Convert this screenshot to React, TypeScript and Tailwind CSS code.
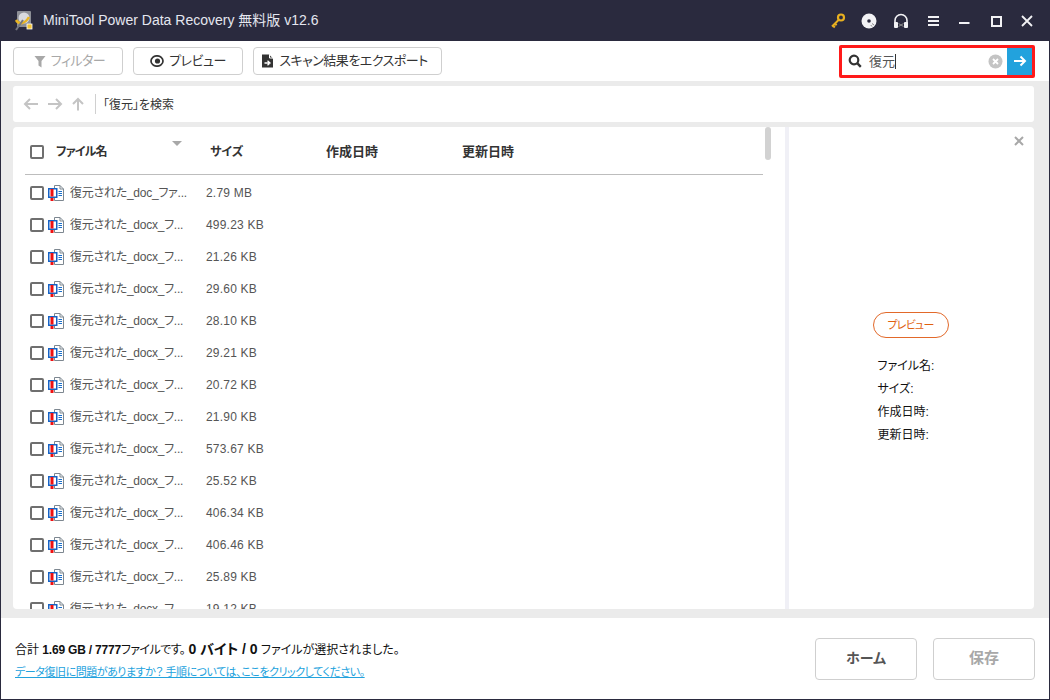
import React from "react";

const sizes = ["2.79 MB","499.23 KB","21.26 KB","29.60 KB","28.10 KB","29.21 KB","20.72 KB","21.90 KB","573.67 KB","25.52 KB","406.34 KB","406.46 KB","25.89 KB","19.12 KB"];

function FileIcon() {
  return (
    <svg width="16" height="16" viewBox="0 0 16 16" className="shrink-0">
      <path d="M6.5 0.5H12L15.5 4V15.5H6.5Z" fill="#fff" stroke="#7d8790" />
      <path d="M12 0.5V4H15.5" fill="none" stroke="#7d8790" />
      <path d="M10.5 6.5H14M10.5 8.5H14M10.5 10.5H14" stroke="#1b6fc9" strokeWidth="1" />
      <rect x="0.75" y="3.75" width="8" height="8.5" fill="#fff" stroke="#1763c6" strokeWidth="1.5" />
      <rect x="2.5" y="4" width="3" height="7.5" fill="#f01010" />
      <rect x="2.5" y="13" width="3" height="3" fill="#f01010" />
    </svg>
  );
}

function Check({ size = "w-[14px] h-[14px]" }: { size?: string }) {
  return <div className={`${size} shrink-0 border-2 border-[#6f6f6f] rounded-[2px] bg-white`} />;
}

function Row({ s }: { s: string }) {
  const name = s === "2.79 MB" ? "復元された_doc_ファ..." : "復元された_docx_フ...";
  return (
    <div className="h-8 shrink-0 flex items-center pl-[17px]">
      <Check />
      <div className="ml-[4px]"><FileIcon /></div>
      <div className="ml-[6px] w-[136px] text-[12px] tracking-[-0.25px] text-[#555] whitespace-nowrap overflow-hidden">{name}</div>
      <div className="text-[12px] tracking-[0.2px] text-[#555] whitespace-nowrap">{s}</div>
    </div>
  );
}

function ToolBtn({ w, children, muted }: { w: string; children: React.ReactNode; muted?: boolean }) {
  return (
    <div className={`${w} h-[28px] border border-[#cfcfcf] rounded-[4px] flex items-center justify-center gap-[5px] text-[13px] tracking-[-0.5px] ${muted ? "text-[#a8a8a8]" : "text-[#333]"}`}>
      {children}
    </div>
  );
}

export default function App() {
  return (
    <div className="w-[1050px] h-[700px] flex flex-col bg-white border-x border-b border-[#2a2a3e] overflow-hidden text-black [font-feature-settings:'palt']" style={{ fontFamily: '"Liberation Sans","Noto Sans CJK JP",sans-serif' }}>
      {/* title bar */}
      <div className="h-[41px] shrink-0 -mx-px bg-[#2a2a3e] flex items-center pl-[14px] pr-[17px]">
        <svg width="20" height="22" viewBox="0 0 20 22" className="shrink-0">
          <rect x="3" y="1" width="14" height="16" rx="1" fill="#8d8f96" />
          <circle cx="10" cy="8" r="5.5" fill="#d9dade" />
          <path d="M2 10C5 15 11 14 15 7" stroke="#e8b422" strokeWidth="2.5" fill="none" />
          <path d="M2 20L9 10" stroke="#75777f" strokeWidth="2" />
          <rect x="13" y="14" width="5" height="5" fill="#f2c230" stroke="#fff" strokeWidth="0.8" />
        </svg>
        <div className="ml-[9px] text-[14px] font-normal text-[#e4e6ef]">MiniTool Power Data Recovery 無料版 v12.6</div>
        <div className="ml-auto flex items-center">
          <svg width="16" height="16" viewBox="0 0 16 16"><circle cx="11" cy="4.5" r="3" fill="none" stroke="#e8b020" strokeWidth="2.2" /><path d="M8.8 6.8L2 13.5M3 12.5L4.8 14.5M5 10.5L6.6 12.2" stroke="#e8b020" strokeWidth="2" fill="none" /></svg>
          <svg width="16" height="16" viewBox="0 0 16 16" className="ml-[15px]"><circle cx="8" cy="8" r="7.5" fill="#f2f2f5" /><circle cx="8" cy="8" r="1.8" fill="#2a2a3e" /><path d="M11 10.5L13 12M9.8 12L11 13.6" stroke="#888" strokeWidth="1" /></svg>
          <svg width="16" height="16" viewBox="0 0 16 16" className="ml-[16px]"><path d="M2 10V7.5a6 6 0 0 1 12 0V10" fill="none" stroke="#f2f2f5" strokeWidth="1.6" /><rect x="1" y="9" width="4" height="6" rx="1" fill="#f2f2f5" /><rect x="11" y="9" width="4" height="6" rx="1" fill="#f2f2f5" /><path d="M5.5 10.5L10.5 13.5M10.5 10.5L5.5 13.5" stroke="#8a8a8a" strokeWidth="1" /></svg>
          <svg width="13" height="12" viewBox="0 0 13 12" className="ml-[18px]"><path d="M1 2H12M1 6H12M1 10H12" stroke="#f2f2f5" strokeWidth="2" /></svg>
          <svg width="12" height="12" viewBox="0 0 12 12" className="ml-[18px]"><path d="M1 8H11.5" stroke="#f2f2f5" strokeWidth="2" /></svg>
          <svg width="12" height="12" viewBox="0 0 12 12" className="ml-[20px]"><rect x="2" y="2" width="9" height="9" fill="none" stroke="#f2f2f5" strokeWidth="2" /></svg>
          <svg width="12" height="12" viewBox="0 0 12 12" className="ml-[19px]"><path d="M1 1L11 11M11 1L1 11" stroke="#f2f2f5" strokeWidth="1.8" /></svg>
        </div>
      </div>

      {/* toolbar */}
      <div className="h-[40px] shrink-0 flex items-center pl-[12px] pr-[14px] gap-[10px]">
        <ToolBtn w="w-[110px] pl-[3px]" muted>
          <svg width="12" height="13" viewBox="0 0 12 13"><path d="M0.5 1H11.5L7.5 6V12.5L4.5 10.5V6Z" fill="#a8a8a8" /></svg>
          フィルター
        </ToolBtn>
        <ToolBtn w="w-[110px]">
          <svg width="14" height="12" viewBox="0 0 14 12"><ellipse cx="7" cy="6" rx="6" ry="5.2" fill="none" stroke="#333" strokeWidth="1.7" /><circle cx="7.5" cy="6" r="2.6" fill="#333" /></svg>
          プレビュー
        </ToolBtn>
        <ToolBtn w="w-[189px] pr-[6px]">
          <svg width="13" height="14" viewBox="0 0 13 14"><path d="M1 0.5H8L12 4.5V13.5H1Z" fill="#333" /><path d="M8.5 0.5V4H12" fill="none" stroke="#fff" /><path d="M3.5 9H8M6.5 6.8L9 9L6.5 11.2" stroke="#fff" strokeWidth="1.3" fill="none" /></svg>
          スキャン結果をエクスポート
        </ToolBtn>
        <div className="ml-auto w-[196px] h-[33px] border-[3px] border-[#ff1a1a] rounded-[2px] flex items-center bg-white">
          <svg width="14" height="14" viewBox="0 0 14 14" className="ml-[6px] shrink-0"><circle cx="6" cy="6" r="4.3" fill="none" stroke="#333" strokeWidth="2.2" /><path d="M9.2 9.2L12.8 12.8" stroke="#333" strokeWidth="2.4" /></svg>
          <div className="ml-[7px] text-[13px] text-[#555] flex-1 leading-none flex items-center">復元<span className="w-px h-[15px] bg-[#333] inline-block" /></div>
          <svg width="15" height="15" viewBox="0 0 15 15" className="mr-[4px] shrink-0"><circle cx="7.5" cy="7.5" r="7" fill="#c4c4c4" /><path d="M5 5L10 10M10 5L5 10" stroke="#fff" strokeWidth="1.8" /></svg>
          <div className="w-[25px] self-stretch bg-[#22a2dd] flex items-center justify-center">
            <svg width="14" height="12" viewBox="0 0 14 12"><path d="M1 6H12M7.5 1.5L12 6L7.5 10.5" fill="none" stroke="#fff" strokeWidth="2" /></svg>
          </div>
        </div>
      </div>

      {/* content */}
      <div className="flex-1 min-h-0 bg-[#ebebeb] pt-[5px] pb-[9px] pl-[12px] pr-[15px] flex flex-col gap-[5px]">
        <div className="h-[36px] shrink-0 bg-white rounded-[3px] flex items-center pl-[10px]">
          <svg width="16" height="12" viewBox="0 0 16 12"><path d="M15 6H2M7 1L2 6L7 11" fill="none" stroke="#c4c4c4" strokeWidth="2" /></svg>
          <svg width="16" height="12" viewBox="0 0 16 12" className="ml-[8px]"><path d="M1 6H14M9 1L14 6L9 11" fill="none" stroke="#c4c4c4" strokeWidth="2" /></svg>
          <svg width="12" height="14" viewBox="0 0 12 14" className="ml-[9px]"><path d="M6 13.5V2M1 7L6 2L11 7" fill="none" stroke="#c4c4c4" strokeWidth="2" /></svg>
          <div className="ml-[11px] w-px h-[20px] bg-[#d0d0d0]" />
          <div className="ml-[7px] mt-[2px] text-[12px] text-[#333]">「復元」を検索</div>
        </div>

        <div className="flex-1 min-h-0 flex">
          {/* list */}
          <div className="relative w-[772px] shrink-0 bg-white rounded-l-[4px] overflow-hidden flex flex-col">
            <div className="h-[48px] shrink-0 mr-[22px] ml-[12px] border-b border-[#bdbdbd] flex items-center pl-[5px] pt-[3px] font-bold text-[12px] text-[#333]">
              <Check size="w-[14px] h-[14px]" />
              <div className="ml-[12px] w-[154px] relative tracking-[-0.8px]">ファイル名
                <div className="absolute left-[116px] top-[-2px] w-0 h-0 border-x-[5px] border-x-transparent border-t-[5px] border-t-[#a8a8a8]" />
              </div>
              <div className="w-[116px]">サイズ</div>
              <div className="w-[136px] text-[13px]">作成日時</div>
              <div className="text-[13px]">更新日時</div>
            </div>
            <div className="flex-1 min-h-0 overflow-hidden flex flex-col pt-[2px]">
              {sizes.map((s, i) => <Row key={i} s={s} />)}
            </div>
            <div className="absolute left-[752px] top-0 w-[6px] h-[33px] bg-[#d2d2d2] rounded-[3px]" />
          </div>
          <div className="w-[4px] shrink-0 bg-[#f0f0f6]" />
          {/* preview */}
          <div className="relative flex-1 bg-white rounded-r-[4px] flex flex-col items-center pt-[185px]">
            <svg width="10" height="10" viewBox="0 0 10 10" className="absolute right-[10px] top-[9px]"><path d="M1 1L9 9M9 1L1 9" stroke="#a8a8a8" strokeWidth="2" /></svg>
            <div className="w-[76px] h-[26px] -ml-[2px] border border-[#e2692a] rounded-[13px] text-[#e0600f] text-[11px] tracking-[-0.8px] flex items-center justify-center">プレビュー</div>
            <div className="mt-[17px] w-[76px] ml-[8px] text-[12px] leading-[23px] text-[#111]">
              <div>ファイル名:</div>
              <div>サイズ:</div>
              <div>作成日時:</div>
              <div>更新日時:</div>
            </div>
          </div>
        </div>
      </div>

      {/* footer */}
      <div className="h-[81px] shrink-0 flex items-center pl-[14px] pr-[14px]">
        <div className="mt-[7px]">
          <div className="text-[12px] text-[#111] leading-[20px] whitespace-nowrap">合計 <b className="tracking-[-0.2px]">1.69 GB / 7777</b><span className="tracking-[-0.6px]">ファイルです。</span> <b className="text-[14px]">0 バイト / 0</b> ファイルが選択されました。</div>
          <a className="text-[11px] tracking-[-0.45px] text-[#22a2dd] underline leading-[25px] block whitespace-nowrap">データ復旧に問題がありますか？ 手順については、ここをクリックしてください。</a>
        </div>
        <div className="ml-auto flex gap-[16px]">
          <div className="w-[102px] h-[42px] border border-[#cfcfcf] rounded-[4px] flex items-center justify-center text-[14px] font-bold text-[#555]">ホーム</div>
          <div className="w-[102px] h-[42px] border border-[#cfcfcf] rounded-[4px] flex items-center justify-center text-[15px] font-bold text-[#a8a8a8]">保存</div>
        </div>
      </div>
    </div>
  );
}
